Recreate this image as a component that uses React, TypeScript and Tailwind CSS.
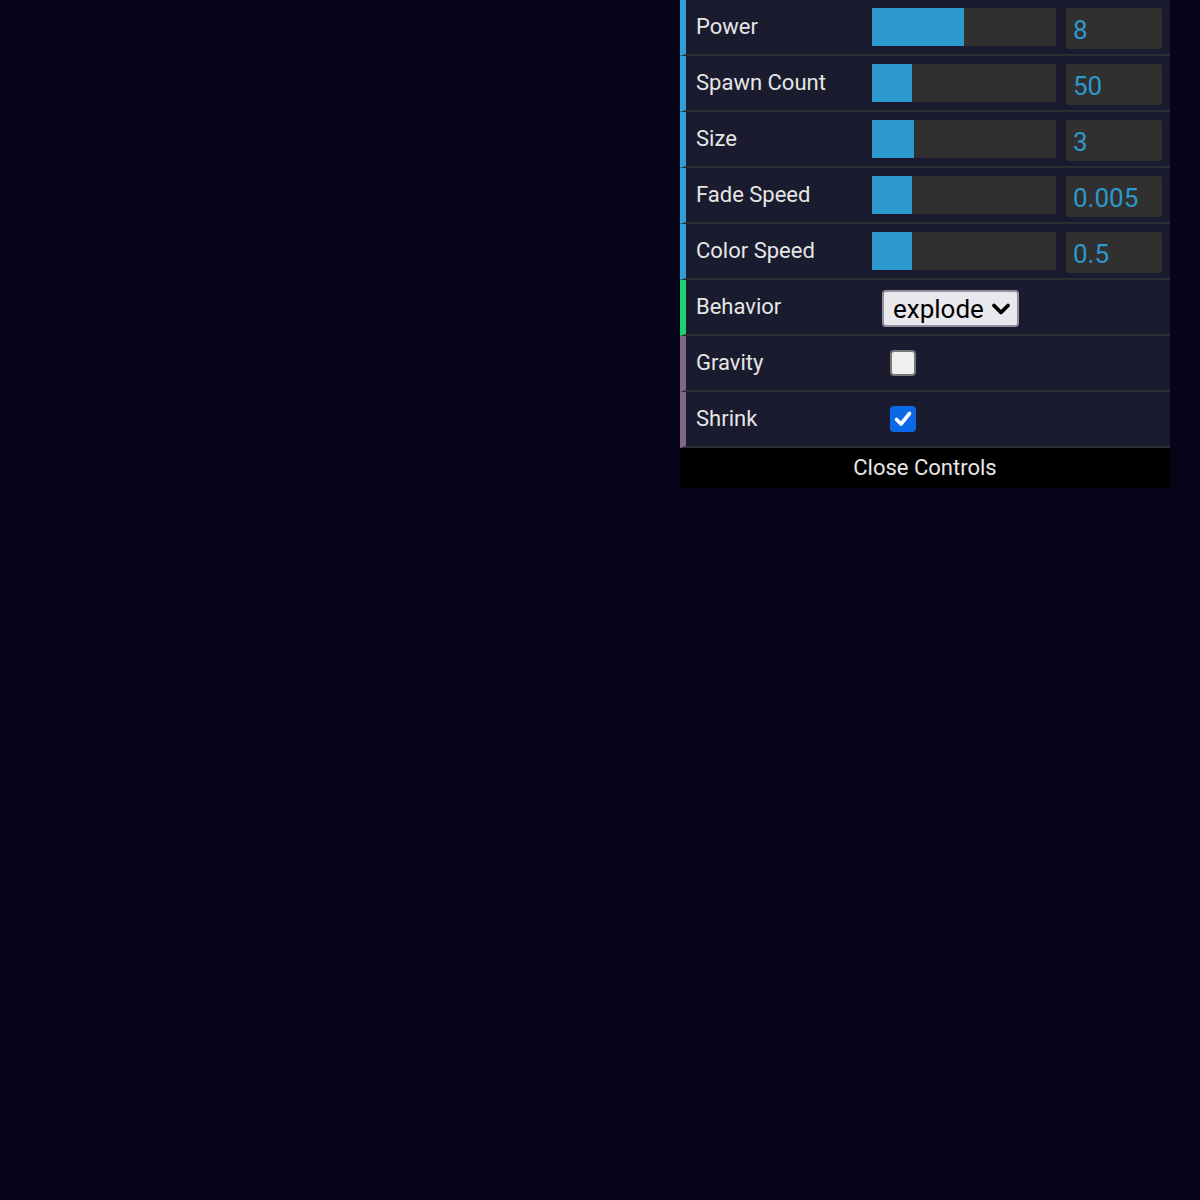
import React from "react";

// Controls panel (dat.gui style), pinned top right

type NumberControl = {
  kind: "number";
  label: string;
  value: string;
  fill: number; // px of the 184px track
};

type SelectControl = { kind: "select"; label: string; value: string };
type BoolControl = { kind: "bool"; label: string; checked: boolean };

type Control = NumberControl | SelectControl | BoolControl;

const controls: Control[] = [
  { kind: "number", label: "Power", value: "8", fill: 92 },
  { kind: "number", label: "Spawn Count", value: "50", fill: 40 },
  { kind: "number", label: "Size", value: "3", fill: 42 },
  { kind: "number", label: "Fade Speed", value: "0.005", fill: 40 },
  { kind: "number", label: "Color Speed", value: "0.5", fill: 40 },
  { kind: "select", label: "Behavior", value: "explode" },
  { kind: "bool", label: "Gravity", checked: false },
  { kind: "bool", label: "Shrink", checked: true },
];

const accent: Record<Control["kind"], string> = {
  number: "border-l-[#2fa1d6]",
  select: "border-l-[#1ed36f]",
  bool: "border-l-[#806787]",
};

function Row({ control }: { control: Control }) {
  return (
    <div
      className={`flex h-[56px] items-center border-l-[6px] border-b-2 border-b-[#2c2c33] pl-[10px] pr-[8px] ${accent[control.kind]}`}
    >
      <div className="w-[176px] shrink-0 text-[22px] leading-none text-[#e6e6e6]">
        {control.label}
      </div>

      {control.kind === "number" && (
        <div className="flex h-full items-start gap-[10px] pt-[8px]">
          <div className="h-[38px] w-[184px] bg-[#303030]">
            <div
              className="h-full bg-[#2d98cc]"
              style={{ width: control.fill }}
            />
          </div>
          <div className="flex h-[41px] w-[96px] items-center rounded-[3px] bg-[#303030] pl-[7px] pt-[3px] text-[26px] leading-none text-[#2d98cc]">
            {control.value}
          </div>
        </div>
      )}

      {control.kind === "select" && (
        <div className="ml-[10px] mt-[3px] flex h-[37px] w-[137px] items-center justify-between rounded-[4px] border-2 border-[#8f8f9d] bg-[#e9e9ed] pl-[9px] pr-[6px] text-[26px] leading-none text-black">
          <span>{control.value}</span>
          <svg width="20" height="14" viewBox="0 0 20 14" fill="none">
            <path
              d="M3 3.5 L10 10.5 L17 3.5"
              stroke="#000"
              strokeWidth="3.8"
              strokeLinecap="round"
              strokeLinejoin="round"
            />
          </svg>
        </div>
      )}

      {control.kind === "bool" &&
        (control.checked ? (
          <div className="ml-[18px] flex h-[26px] w-[26px] items-center justify-center rounded-[4px] bg-[#0b68e6]">
            <svg width="22" height="22" viewBox="0 0 22 22" fill="none">
              <path
                d="M4.5 11.5 L9 16 L17.5 5.5"
                stroke="#fff"
                strokeWidth="3.6"
                strokeLinecap="round"
                strokeLinejoin="round"
              />
            </svg>
          </div>
        ) : (
          <div className="ml-[18px] h-[26px] w-[26px] rounded-[4px] border-2 border-[#767676] bg-[#efefef]" />
        ))}
    </div>
  );
}

export default function App() {
  return (
    <div
      className="flex h-[1200px] w-full justify-end bg-[#050419] pr-[30px]"
      style={{ fontFamily: "Roboto, 'Noto Sans', sans-serif" }}
    >
      <div className="w-[490px] self-start bg-[#1a1b2e]">
        {controls.map((c) => (
          <Row key={c.label} control={c} />
        ))}
        <div className="flex h-[40px] items-center justify-center bg-black text-[22px] leading-none text-[#e6e6e6]">
          Close Controls
        </div>
      </div>
    </div>
  );
}
